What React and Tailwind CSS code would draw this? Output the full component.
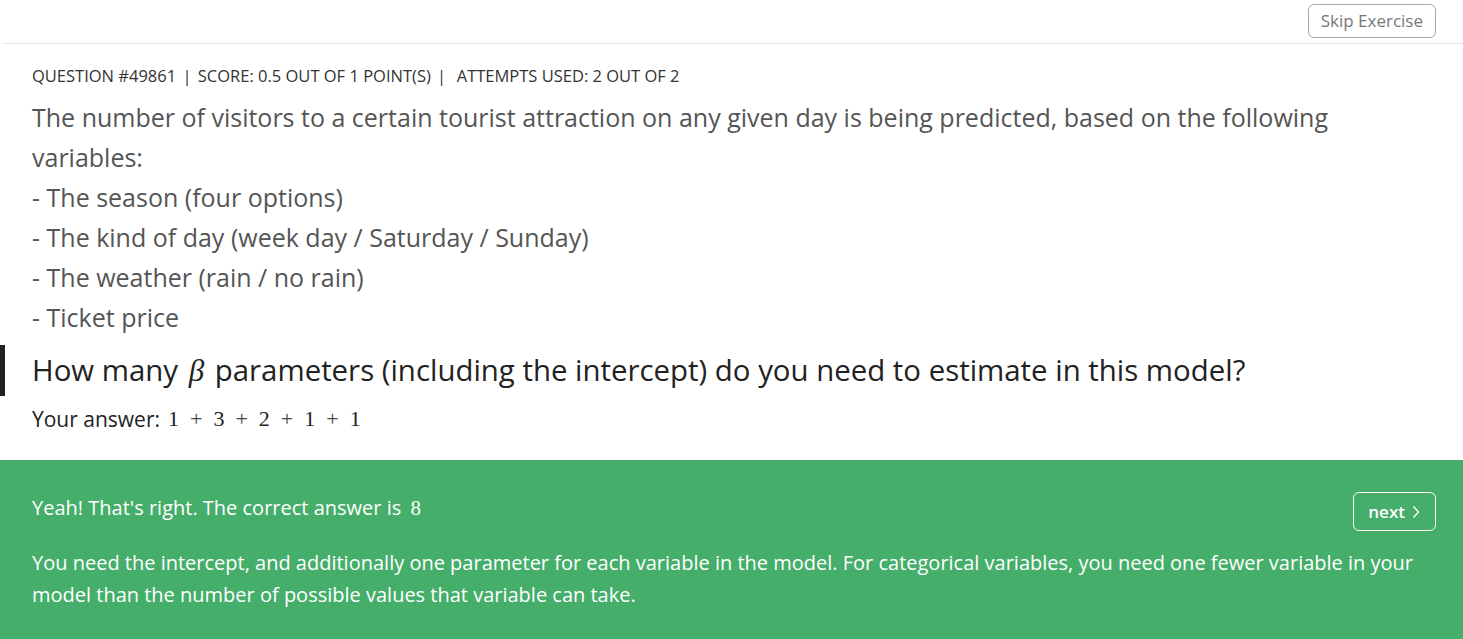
import React from 'react';

const font = { fontFamily: '"Open Sans", "Noto Sans", sans-serif' };

function MathAnswer() {
    // rendered like KaTeX: 1 + 3 + 2 + 1 + 1
    const parts = ['1', '3', '2', '1', '1'];
    return (
        <span className="ml-[8px] inline-flex items-center font-['Liberation_Serif',serif] text-[22px] text-[#222]">
            {parts.map((p, i) => (
                <span key={i} className="flex items-center">
                    {i > 0 && <span className="mx-[11px] text-[#444]">+</span>}
                    <span>{p}</span>
                </span>
            ))}
        </span>
    );
}

export default function App() {
    return (
        <div className="min-h-[639px] w-full bg-white" style={font}>
            {/* top bar */}
            <header className="ml-[3px] flex h-[44px] items-start justify-end border-b border-[#e2e2e2] pr-[27px] pt-[4px]">
                <button className="h-[34px] rounded-[6px] border border-[#a9a9a9] px-[12px] text-[17px] text-[#777]">Skip Exercise</button>
            </header>

            <main className="px-[32px] pt-[20px]">
                <div className="text-[16.5px] leading-[24px] text-[#333]">
                    QUESTION #49861 <span className="mx-[2px]">|</span> SCORE: 0.5 OUT OF 1 POINT(S) <span className="mx-[2px]">|</span>&nbsp; ATTEMPTS USED: 2 OUT OF 2
                </div>

                <div className="mt-[9px] text-[25px] leading-[40px] text-[#555]">
                    <p>The number of visitors to a certain tourist attraction on any given day is being predicted, based on the following variables:</p>
                    <p>- The season (four options)</p>
                    <p>- The kind of day (week day / Saturday / Sunday)</p>
                    <p>- The weather (rain / no rain)</p>
                    <p>- Ticket price</p>
                </div>
            </main>

            <div className="mt-[8px] border-l-[5px] border-[#222] py-[5px] pl-[27px] text-[29.4px] leading-[40px] text-[#222]">
                How many <span className="mx-[3px] font-['Liberation_Serif',serif] text-[31px] italic">β</span> parameters (including the intercept) do you need to estimate in this model?
            </div>

            <div className="mt-[9px] flex items-center px-[32px] text-[21px] leading-[28px] text-[#222]">
                Your answer:
                <MathAnswer />
            </div>

            {/* feedback */}
            <section className="mt-[27px] bg-[#45ae6a] pb-[30px] pl-[32px] pr-[27px] pt-[24px] text-white">
                <div className="flex items-center justify-between">
                    <p className="text-[20px] leading-[32px]">
                        Yeah! That's right. The correct answer is <span className="ml-[4px] font-['Liberation_Serif',serif] text-[21px]">8</span>
                    </p>
                    <button className="mt-[8px] flex h-[39px] items-center gap-[6px] rounded-[6px] border border-white px-[14px] text-[17px] font-semibold">
                        next
                        <svg width="10" height="14" viewBox="0 0 10 14" fill="none" stroke="white" strokeWidth="1.4">
                            <path d="M2.5 1.5 L7.5 7 L2.5 12.5" />
                        </svg>
                    </button>
                </div>
                <p className="mt-[16px] pr-[5px] text-[20px] leading-[32px]">
                    You need the intercept, and additionally one parameter for each variable in the model. For categorical variables, you need one fewer variable in your model than the number of possible values that variable can take.
                </p>
            </section>
        </div>
    );
}
